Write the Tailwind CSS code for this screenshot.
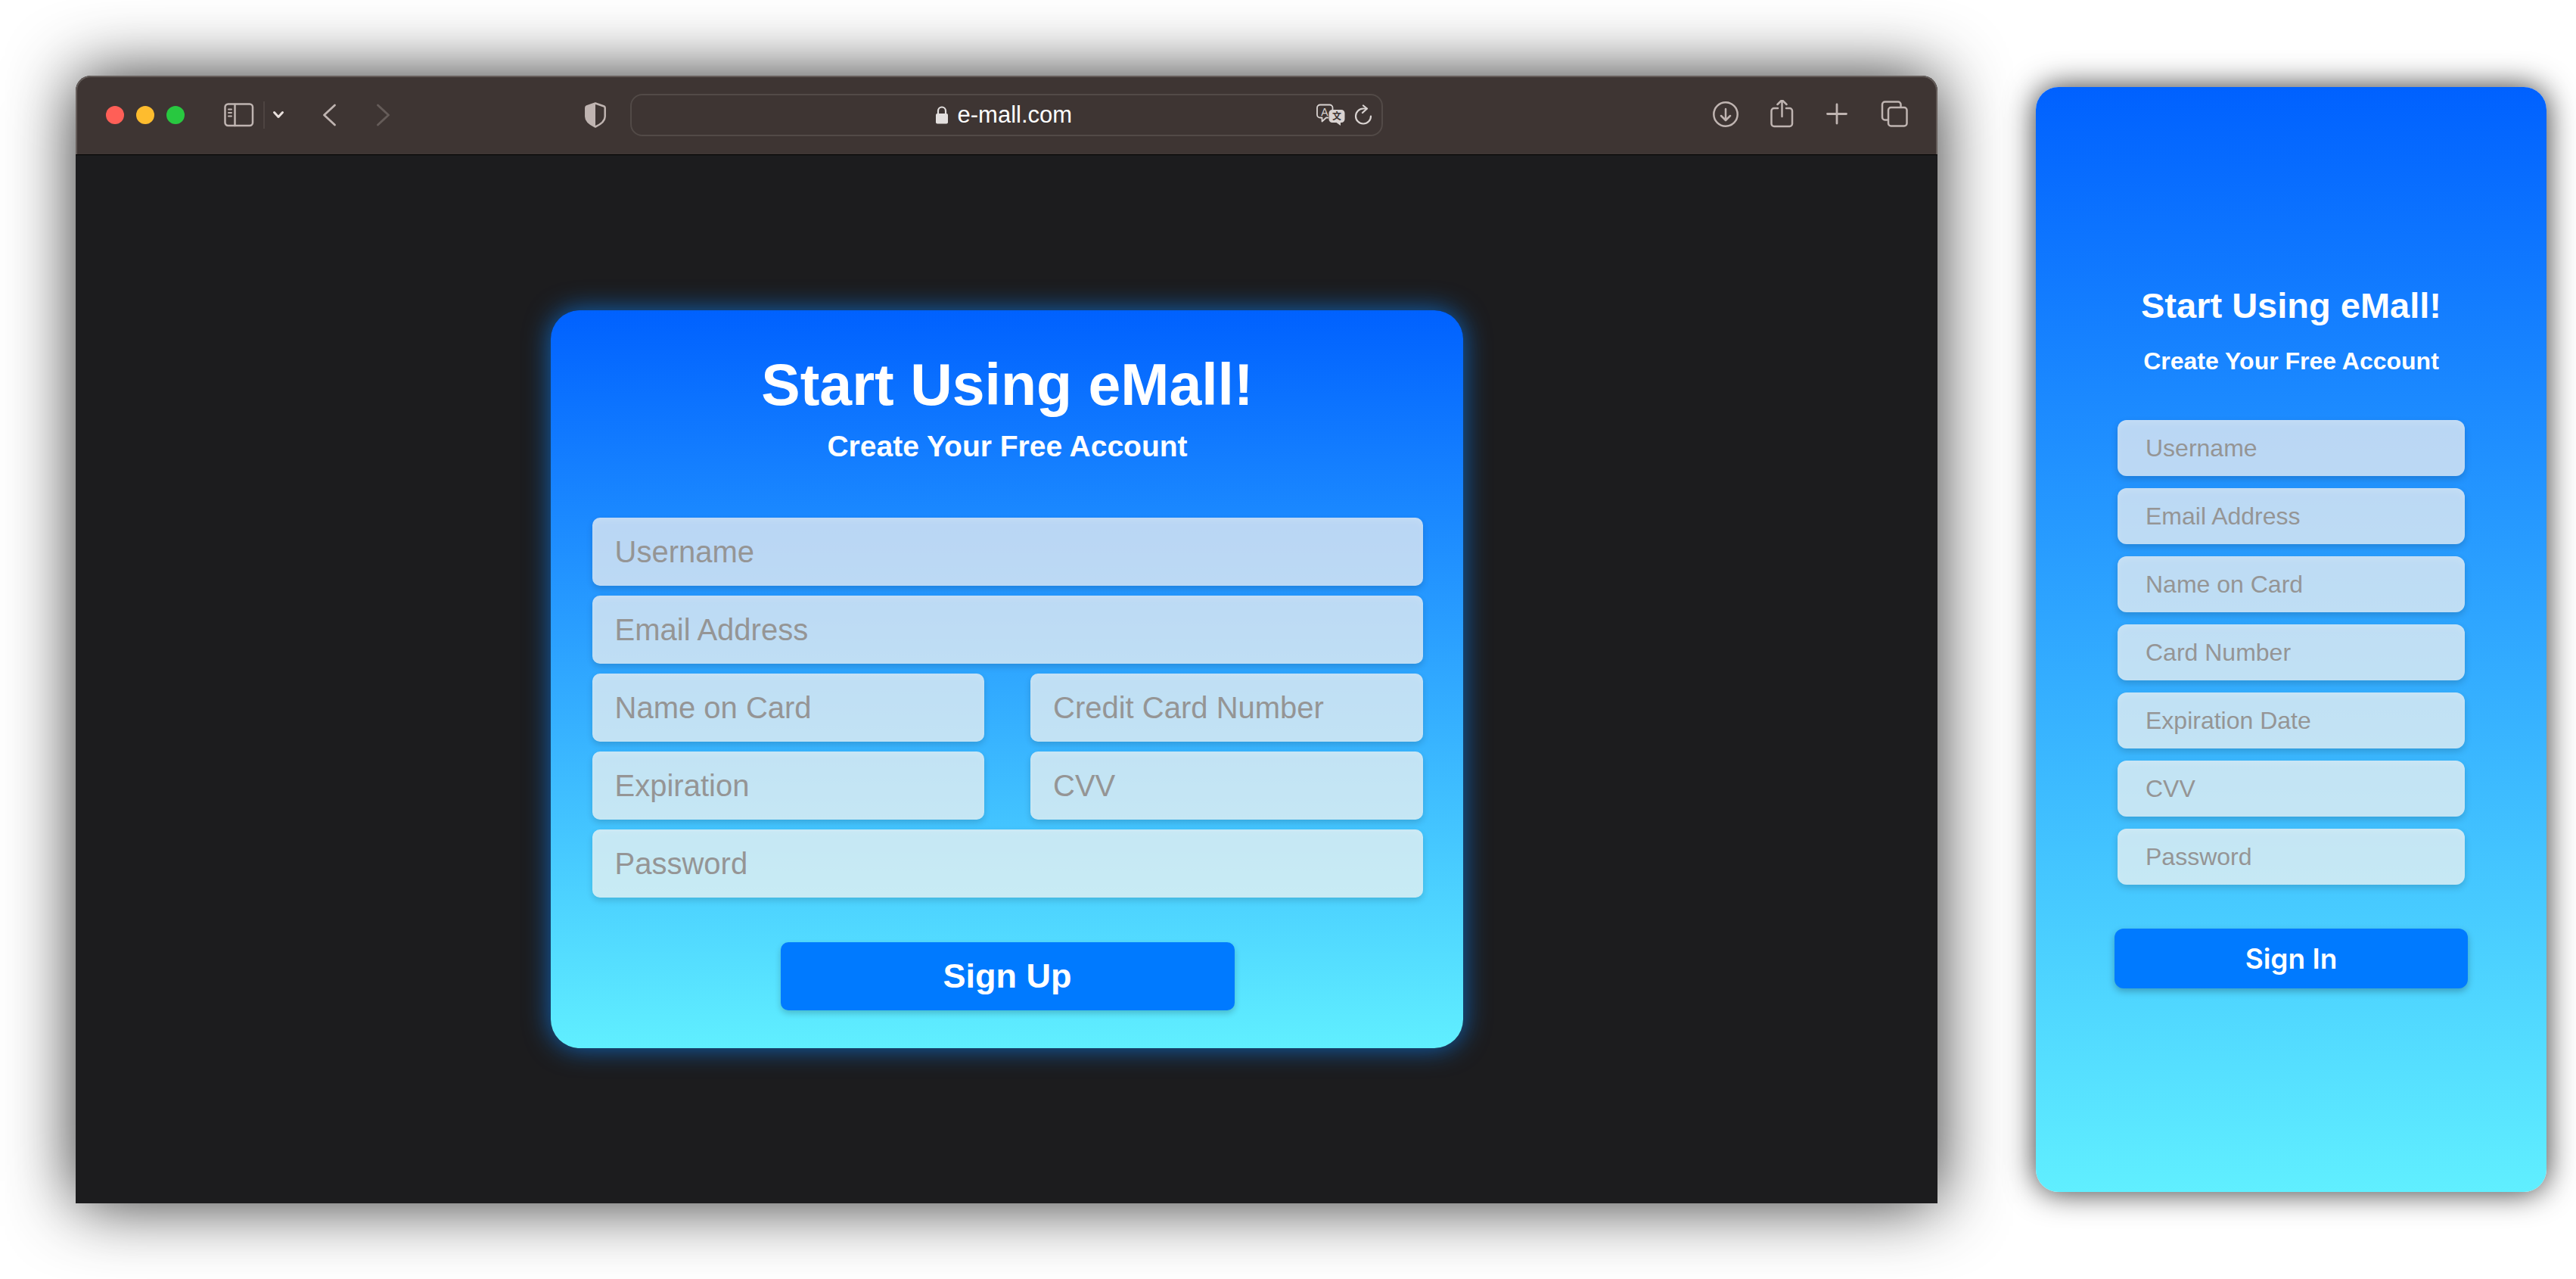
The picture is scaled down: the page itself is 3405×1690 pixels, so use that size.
<!DOCTYPE html>
<html lang="en">
<head>
<meta charset="utf-8">
<meta name="viewport" content="width=device-width, initial-scale=1">
<title>eMall – Create Your Free Account</title>
<script src="https://cdn.jsdelivr.net/npm/@tailwindcss/browser@4"></script>
</head>
<body class="flex min-h-screen items-start gap-[130px] bg-white pt-[100px] pr-[39px] pb-[100px] pl-[100px] font-['Liberation_Sans',Arial,sans-serif]">

  <!-- Desktop browser window -->
  <section class="flex min-w-0 flex-1 flex-col rounded-t-[20px] bg-[#1c1c1e] shadow-[0_0_90px_rgba(0,0,0,0.82)]" aria-label="Desktop">
    <header class="grid h-[104px] grid-cols-[1fr_995px_1fr] items-center rounded-t-[20px] border-x-2 border-t-2 border-[#645c59] bg-[#3e3533] pb-[2px] text-[#bfb4b1]">
      <div class="flex items-center pr-[32px] pl-[38px]">
        <div class="flex gap-4">
          <button class="size-6 rounded-full bg-[#ff5f57]" aria-label="Close"></button>
          <button class="size-6 rounded-full bg-[#febc2e]" aria-label="Minimize"></button>
          <button class="size-6 rounded-full bg-[#28c840]" aria-label="Zoom"></button>
        </div>
        <button class="ml-[52px]" aria-label="Sidebar">
          <svg class="block" width="40" height="32" viewBox="0 0 40 32" fill="none" stroke="currentColor" stroke-width="2.5" stroke-linecap="round">
            <rect x="1.5" y="1.5" width="36.500" height="28.500" rx="4"/>
            <path d="M14.500 2v28"/>
            <path d="M6 8.500h4M6 13h4M6 17.500h4" stroke-width="2"/>
          </svg>
        </button>
        <span class="ml-3 h-9 w-[2px] bg-[#4d4441]"></span>
        <button class="ml-[10px]" aria-label="Tab groups">
          <svg class="block" width="16" height="12" viewBox="0 0 16 12" fill="none" stroke="#e9e0dd" stroke-width="3" stroke-linecap="round" stroke-linejoin="round"><path d="M2.500 2.500 8 8.500l5.500-6"/></svg>
        </button>
        <button class="ml-[50px]" aria-label="Back">
          <svg class="block" width="20" height="30" viewBox="0 0 20 30" fill="none" stroke="currentColor" stroke-width="2.800" stroke-linecap="round" stroke-linejoin="round"><path d="M16.500 2 2.500 15l14 13"/></svg>
        </button>
        <button class="ml-[50px] text-[#655c59]" aria-label="Forward">
          <svg class="block" width="20" height="30" viewBox="0 0 20 30" fill="none" stroke="currentColor" stroke-width="2.800" stroke-linecap="round" stroke-linejoin="round"><path d="M3.500 2l14 13-14 13"/></svg>
        </button>
        <button class="ml-auto" aria-label="Privacy report">
          <svg class="block" width="28" height="34" viewBox="0 0 28 34"><path d="M14 1.500 2.500 5.500Q1.300 6 1.300 7.500V19c0 6 5 10 12.700 13.500C21.700 29 26.700 25 26.700 19V7.500q0-1.500-1.200-2z" fill="none" stroke="currentColor" stroke-width="2.500" stroke-linejoin="round"/><path d="M14 1.500 2 5.800V19c0 6 5 10 12 13.500z" fill="currentColor"/></svg>
        </button>
      </div>

      <div class="grid h-14 grid-cols-[1fr_auto_1fr] items-center rounded-[16px] border-2 border-[#524a47]">
        <span></span>
        <div class="flex items-center gap-3 text-[#e3dfde]">
          <svg width="18" height="26" viewBox="0 0 18 26"><path d="M4 12V7.500a5 5 0 0 1 10 0V12" fill="none" stroke="currentColor" stroke-width="2.200"/><rect x="1" y="11" width="16" height="13.500" rx="2" fill="currentColor"/></svg>
          <input class="w-[160px] bg-transparent text-[31px] leading-9 text-white outline-none" type="text" value="e-mall.com" aria-label="Address">
        </div>
        <div class="flex items-center justify-end gap-3 pr-[12px] text-[#d9d3d1]">
          <button aria-label="Translate">
            <svg class="block" width="38" height="30" viewBox="0 0 38 30">
              <path d="M16 18.500h-3L7.500 23.500v-5H5a4 4 0 0 1-4-4V5.500a4 4 0 0 1 4-4h12.500a4 4 0 0 1 4 4V8" fill="none" stroke="currentColor" stroke-width="1.800" stroke-linejoin="round"/>
              <text x="11" y="15.500" text-anchor="middle" font-size="14" font-family="Liberation Sans, sans-serif" fill="currentColor">A</text>
              <path d="M21 8h12a4.500 4.500 0 0 1 4.500 4.500v8A4.500 4.500 0 0 1 33 25h-1v4l-5.500-4H21a4.500 4.500 0 0 1-4.500-4.500v-8A4.500 4.500 0 0 1 21 8z" fill="currentColor"/>
              <text x="27" y="21" text-anchor="middle" font-size="12" font-weight="700" font-family="Noto Sans CJK SC, sans-serif" fill="#3e3533">文</text>
            </svg>
          </button>
          <button aria-label="Reload">
            <svg class="block" width="24" height="28" viewBox="0 0 24 28" fill="none" stroke="currentColor" stroke-width="2.200" stroke-linecap="round" stroke-linejoin="round"><path d="M22 15.500a10 10 0 1 1-10-10h4.500"/><path d="M12 1.500l5 4-6 5.500"/></svg>
          </button>
        </div>
      </div>

      <div class="flex items-center justify-end gap-[34px] pr-[35px]">
        <button aria-label="Downloads"><svg class="block" width="40" height="40" viewBox="0 0 40 40" fill="none" stroke="currentColor" stroke-width="2.500" stroke-linecap="round" stroke-linejoin="round"><circle cx="19" cy="19" r="15.700"/><path d="M19 12v14.500M13 21l6 6 6-6"/></svg></button>
        <button aria-label="Share"><svg class="block" width="40" height="40" viewBox="0 0 40 40" fill="none" stroke="currentColor" stroke-width="2.500" stroke-linecap="round" stroke-linejoin="round"><path d="M14 11H9a3.500 3.500 0 0 0-3.500 3.500v17A3.500 3.500 0 0 0 9 35h20.500a3.500 3.500 0 0 0 3.500-3.500v-17a3.500 3.500 0 0 0-3.500-3.500H25"/><path d="M19.500 22V1M13.500 6l6-6 6 6"/></svg></button>
        <button aria-label="New tab"><svg class="block" width="40" height="40" viewBox="0 0 40 40" fill="none" stroke="currentColor" stroke-width="2.800" stroke-linecap="round"><path d="M5.500 18.500h25M18 6v25"/></svg></button>
        <button aria-label="Tab overview"><svg class="block" width="40" height="40" viewBox="0 0 40 40" fill="none" stroke="currentColor" stroke-width="2.500" stroke-linejoin="round"><rect x="12" y="10" width="24.500" height="24.500" rx="3.500"/><path d="M11 26.500H7.500A3.500 3.500 0 0 1 4 23V6a3.500 3.500 0 0 1 3.500-3.500H25A3.500 3.500 0 0 1 28.500 6v3"/></svg></button>
      </div>
    </header>

    <main class="flex justify-center border-t border-black px-10 pt-[205px] pb-[205px]">
      <form class="flex w-full max-w-[1206px] flex-col items-center rounded-[38px] bg-linear-to-b/srgb from-[#0061ff] to-[#60efff] pt-[54px] pr-[53px] pb-[50px] pl-[55px] text-white shadow-[0_0_34px_rgba(10,132,255,0.7)]">
        <h1 class="text-[77px] leading-[88px] font-bold">Start Using eMall!</h1>
        <p class="mt-[14px] text-[39px] leading-[48px] font-bold">Create Your Free Account</p>
        <div class="mt-[70px] grid w-full grid-cols-2 gap-x-[61px] gap-y-[13px]">
          <input class="col-span-2 h-[90px] min-w-0 rounded-[10px] bg-[#fbf5f0]/71 px-[30px] text-[40px] text-[#444] shadow-[0_4px_8px_rgba(0,0,0,0.14),inset_0_4px_8px_rgba(255,255,255,0.15)] outline-none placeholder:text-[#959595]" type="text" placeholder="Username" aria-label="Username">
          <input class="col-span-2 h-[90px] min-w-0 rounded-[10px] bg-[#fbf5f0]/71 px-[30px] text-[40px] text-[#444] shadow-[0_4px_8px_rgba(0,0,0,0.14),inset_0_4px_8px_rgba(255,255,255,0.15)] outline-none placeholder:text-[#959595]" type="email" placeholder="Email Address" aria-label="Email Address">
          <input class="h-[90px] min-w-0 rounded-[10px] bg-[#fbf5f0]/71 px-[30px] text-[40px] text-[#444] shadow-[0_4px_8px_rgba(0,0,0,0.14),inset_0_4px_8px_rgba(255,255,255,0.15)] outline-none placeholder:text-[#959595]" type="text" placeholder="Name on Card" aria-label="Name on Card">
          <input class="h-[90px] min-w-0 rounded-[10px] bg-[#fbf5f0]/71 px-[30px] text-[40px] text-[#444] shadow-[0_4px_8px_rgba(0,0,0,0.14),inset_0_4px_8px_rgba(255,255,255,0.15)] outline-none placeholder:text-[#959595]" type="text" placeholder="Credit Card Number" aria-label="Credit Card Number">
          <input class="h-[90px] min-w-0 rounded-[10px] bg-[#fbf5f0]/71 px-[30px] text-[40px] text-[#444] shadow-[0_4px_8px_rgba(0,0,0,0.14),inset_0_4px_8px_rgba(255,255,255,0.15)] outline-none placeholder:text-[#959595]" type="text" placeholder="Expiration" aria-label="Expiration">
          <input class="h-[90px] min-w-0 rounded-[10px] bg-[#fbf5f0]/71 px-[30px] text-[40px] text-[#444] shadow-[0_4px_8px_rgba(0,0,0,0.14),inset_0_4px_8px_rgba(255,255,255,0.15)] outline-none placeholder:text-[#959595]" type="text" placeholder="CVV" aria-label="CVV">
          <input class="col-span-2 h-[90px] min-w-0 rounded-[10px] bg-[#fbf5f0]/71 px-[30px] text-[40px] text-[#444] shadow-[0_4px_8px_rgba(0,0,0,0.14),inset_0_4px_8px_rgba(255,255,255,0.15)] outline-none placeholder:text-[#959595]" type="password" placeholder="Password" aria-label="Password">
        </div>
        <button class="mt-[59px] h-[90px] w-[600px] rounded-[10px] bg-[#007aff] text-[45px] leading-[52px] font-bold shadow-[0_4px_8px_rgba(0,0,0,0.2)]" type="submit">Sign Up</button>
      </form>
    </main>
  </section>

  <!-- Mobile sign-up screen -->
  <form class="mt-[15px] flex w-[675px] shrink-0 flex-col items-center rounded-[30px] bg-linear-to-b/srgb from-[#0061ff] to-[#60efff] px-[104px] pt-[261px] pb-[269px] text-white shadow-[0_0_40px_rgba(0,0,0,0.8)]">
    <h2 class="text-[47px] leading-[56px] font-bold">Start Using eMall!</h2>
    <p class="mt-[25px] text-[32px] leading-[40px] font-bold">Create Your Free Account</p>
    <div class="mt-[58px] flex w-full flex-col gap-4 px-1">
      <input class="h-[74px] min-w-0 rounded-[12px] bg-[#fbf5f0]/71 px-[37px] text-[32px] text-[#444] shadow-[0_4px_10px_rgba(0,0,0,0.16),inset_0_4px_10px_rgba(255,255,255,0.15)] outline-none placeholder:text-[#959595]" type="text" placeholder="Username" aria-label="Username">
      <input class="h-[74px] min-w-0 rounded-[12px] bg-[#fbf5f0]/71 px-[37px] text-[32px] text-[#444] shadow-[0_4px_10px_rgba(0,0,0,0.16),inset_0_4px_10px_rgba(255,255,255,0.15)] outline-none placeholder:text-[#959595]" type="email" placeholder="Email Address" aria-label="Email Address">
      <input class="h-[74px] min-w-0 rounded-[12px] bg-[#fbf5f0]/71 px-[37px] text-[32px] text-[#444] shadow-[0_4px_10px_rgba(0,0,0,0.16),inset_0_4px_10px_rgba(255,255,255,0.15)] outline-none placeholder:text-[#959595]" type="text" placeholder="Name on Card" aria-label="Name on Card">
      <input class="h-[74px] min-w-0 rounded-[12px] bg-[#fbf5f0]/71 px-[37px] text-[32px] text-[#444] shadow-[0_4px_10px_rgba(0,0,0,0.16),inset_0_4px_10px_rgba(255,255,255,0.15)] outline-none placeholder:text-[#959595]" type="text" placeholder="Card Number" aria-label="Card Number">
      <input class="h-[74px] min-w-0 rounded-[12px] bg-[#fbf5f0]/71 px-[37px] text-[32px] text-[#444] shadow-[0_4px_10px_rgba(0,0,0,0.16),inset_0_4px_10px_rgba(255,255,255,0.15)] outline-none placeholder:text-[#959595]" type="text" placeholder="Expiration Date" aria-label="Expiration Date">
      <input class="h-[74px] min-w-0 rounded-[12px] bg-[#fbf5f0]/71 px-[37px] text-[32px] text-[#444] shadow-[0_4px_10px_rgba(0,0,0,0.16),inset_0_4px_10px_rgba(255,255,255,0.15)] outline-none placeholder:text-[#959595]" type="text" placeholder="CVV" aria-label="CVV">
      <input class="h-[74px] min-w-0 rounded-[12px] bg-[#fbf5f0]/71 px-[37px] text-[32px] text-[#444] shadow-[0_4px_10px_rgba(0,0,0,0.16),inset_0_4px_10px_rgba(255,255,255,0.15)] outline-none placeholder:text-[#959595]" type="password" placeholder="Password" aria-label="Password">
    </div>
    <button class="mt-[58px] h-[79px] w-full rounded-[12px] bg-[#007aff] font-[Inter,sans-serif] text-[37px] leading-[46px] font-semibold shadow-[0_4px_10px_rgba(0,0,0,0.25)]" type="submit">Sign In</button>
  </form>
</body>
</html>
